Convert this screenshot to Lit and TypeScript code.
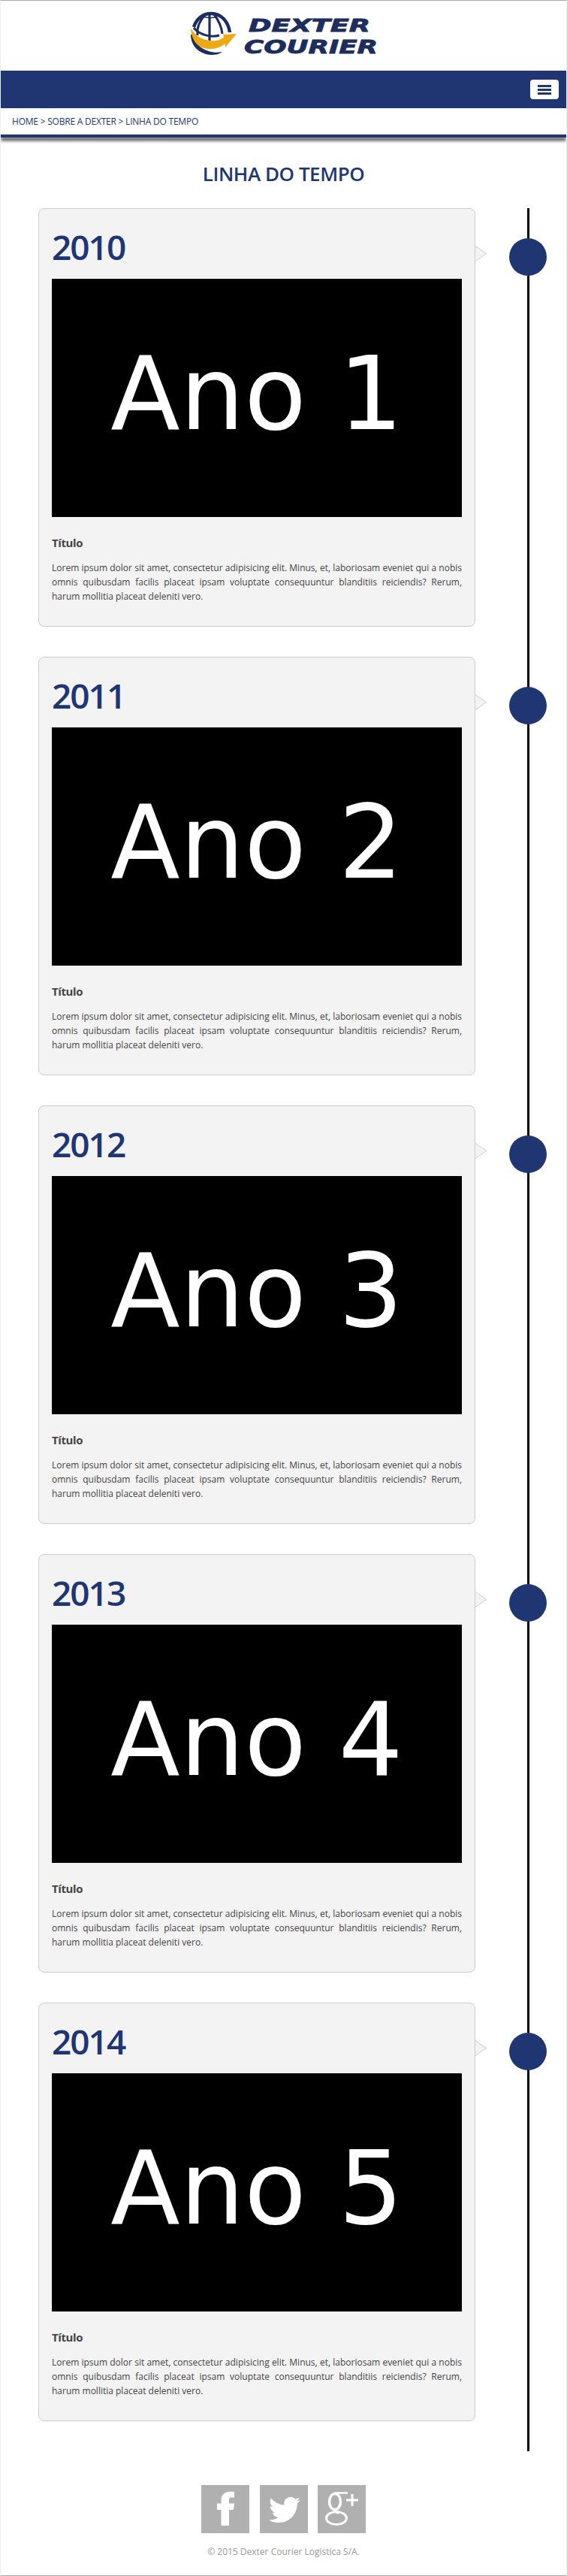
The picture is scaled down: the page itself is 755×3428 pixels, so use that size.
import { LitElement, html, css, svg } from "lit";
import { customElement } from "lit/decorators.js";

const LOREM =
  "Lorem ipsum dolor sit amet, consectetur adipisicing elit. Minus, et, laboriosam eveniet qui a nobis omnis quibusdam facilis placeat ipsam voluptate consequuntur blanditiis reiciendis? Rerum, harum mollitia placeat deleniti vero.";

const YEARS = [2010, 2011, 2012, 2013, 2014];

const logo = svg`
  <g fill="none" stroke="#1c2d5e">
    <path d="M258 36 C262 24 271 18 281 18 C295 18 304 29 306 43" stroke-width="4.500"/>
    <path d="M274 19 C266 27 262 37 263 47" stroke-width="3"/>
    <path d="M285 19 C291 27 295 35 296 45" stroke-width="3"/>
    <path d="M279 18 V60" stroke-width="3.200"/>
    <path d="M258 37 C266 47 282 50 292 47" stroke-width="3"/>
    <path d="M270 22 C276 24 284 24 289 22" stroke-width="1.600"/>
    <path d="M254 46 C254 60 264 72 281 73 C288 73 292 72 296 69 C282 72 262 66 256 46 Z" fill="#1c2d5e" stroke="none"/>
  </g>
  <path d="M254 37 C258 46 268 53 280 54 C288 55 294 53 298 50 L297 46 L315 45 L300 63 L300 58 C294 63 285 66 277 65 C264 64 255 55 254 37 Z" fill="#eeaa14"/>
  <g font-family="'DejaVu Sans', sans-serif" font-weight="700" font-style="italic" fill="#1c2d5e" stroke="#1c2d5e" stroke-width="0.800">
    <text x="331" y="42" font-size="23" textLength="162" lengthAdjust="spacingAndGlyphs">DEXTER</text>
    <text x="325" y="71" font-size="24" textLength="178" lengthAdjust="spacingAndGlyphs">COURIER</text>
  </g>
`;

const facebook = svg`<path fill="#fff" d="M37 54V33h6l1-8.500h-7v-5c0-2 1-3 3-3h4V9c-1.500-.3-3-.3-5-.3-8 0-12.500 4.300-12.500 11.300v4.500H21V33h5.500v21z"/>`;

const twitter = svg`<path fill="#fff" transform="translate(12 12) scale(1.75)" d="M23.953 4.57a10 10 0 01-2.825.775 4.958 4.958 0 002.163-2.723c-.951.555-2.005.959-3.127 1.184a4.92 4.92 0 00-8.384 4.482C7.69 8.095 4.067 6.13 1.64 3.162a4.822 4.822 0 00-.666 2.475c0 1.71.87 3.213 2.188 4.096a4.904 4.904 0 01-2.228-.616v.06a4.923 4.923 0 003.946 4.827 4.996 4.996 0 01-2.212.085 4.936 4.936 0 004.604 3.417 9.867 9.867 0 01-6.102 2.105c-.39 0-.779-.023-1.17-.067a13.995 13.995 0 007.557 2.209c9.053 0 13.998-7.496 13.998-13.985 0-.21 0-.42-.015-.63A9.935 9.935 0 0024 4.59z"/>`;

const gplus = svg`
  <g fill="none" stroke="#fff">
    <ellipse cx="23" cy="22" rx="7.500" ry="10.500" stroke-width="3.500"/>
    <ellipse cx="25" cy="44" rx="13.500" ry="8.500" stroke-width="3"/>
    <path d="M22 10.500 H40" stroke-width="2.500"/>
    <path d="M23 32 C20 35 24 36 28 38" stroke-width="2.500"/>
    <path d="M46 12 V28 M38 20 H54" stroke-width="3"/>
  </g>`;

@customElement("app-root")
export class AppRoot extends LitElement {
  static styles = css`
    :host {
      display: block;
      box-sizing: border-box;
      height: 3428px;
      border: 1px solid #eee;
      border-top-color: #aaa;
      border-bottom-color: #aaa;
      background: #fff;
      font-family: "Open Sans", sans-serif;
      color: #444;
      overflow: hidden;
    }
    .logo-bar {
      height: 93px;
      display: flex;
      justify-content: center;
      align-items: flex-start;
    }
    .logo-bar svg {
      display: block;
      margin-top: 9px;
    }
    .nav {
      height: 50px;
      background: #203673;
      display: flex;
      align-items: center;
      justify-content: flex-end;
      padding-right: 10px;
    }
    .burger {
      width: 38px;
      height: 26px;
      background: #fff;
      border-radius: 4px;
      display: flex;
      flex-direction: column;
      align-items: center;
      justify-content: center;
      gap: 2px;
    }
    .burger span {
      display: block;
      width: 18px;
      height: 3px;
      background: #203673;
    }
    .crumbs {
      height: 35px;
      line-height: 35px;
      padding-left: 15px;
      font-size: 12px;
      color: #203673;
      text-transform: uppercase;
      letter-spacing: -0.22px;
    }
    .rule {
      height: 4px;
      background: #203673;
      box-shadow: 0 4px 4px #333;
    }
    h1 {
      margin: 0;
      padding-top: 33px;
      height: 61px;
      line-height: 30px;
      font-size: 26px;
      font-weight: 600;
      text-align: center;
      color: #203673;
      letter-spacing: -0.45px;
      box-sizing: content-box;
    }
    .timeline {
      position: relative;
      margin: 0 0 0 50px;
      width: 582px;
    }
    .line {
      position: absolute;
      left: 651px;
      top: 0;
      bottom: 0;
      width: 3px;
      background: #000;
    }
    .item {
      position: relative;
      padding-bottom: 40px;
    }
    .card {
      box-sizing: border-box;
      height: 557px;
      background: #f3f3f3;
      border: 1px solid #ccc;
      border-radius: 8px;
      padding: 17px 17px 0;
    }
    .arrow {
      position: absolute;
      left: 581px;
      top: 50px;
      display: block;
    }
    .dot {
      position: absolute;
      left: 627px;
      top: 40px;
      width: 50px;
      height: 50px;
      border-radius: 50%;
      background: #203673;
    }
    h2 {
      margin: 3px 0 13px;
      height: 60px;
      line-height: 60px;
      font-size: 46px;
      font-weight: 600;
      color: #203673;
      letter-spacing: -2px;
    }
    .img {
      box-sizing: border-box;
      height: 317px;
      padding-bottom: 11px;
      background: #000;
      color: #fff;
      display: flex;
      align-items: center;
      justify-content: center;
      font-family: "DejaVu Sans", sans-serif;
      font-size: 135px;
    }
    h3 {
      margin: 24px 0 14px;
      height: 20px;
      line-height: 20px;
      font-size: 15px;
      font-weight: 700;
      letter-spacing: -0.4px;
    }
    p {
      margin: 0;
      font-size: 12px;
      line-height: 19px;
      text-align: justify;
    }
    .social {
      display: flex;
      justify-content: center;
      gap: 13.5px;
      margin-top: 45px;
    }
    .social svg {
      display: block;
      background: #b0b0b0;
    }
    .copy {
      margin-top: 15px;
      line-height: 20px;
      font-size: 12px;
      text-align: center;
      color: #999;
    }
  `;

  render() {
    return html`
      <header class="logo-bar">
        <svg width="261" height="68" viewBox="247 10 261 68">${logo}</svg>
      </header>
      <nav class="nav">
        <div class="burger"><span></span><span></span><span></span></div>
      </nav>
      <div class="crumbs">Home &gt; Sobre a Dexter &gt; Linha do Tempo</div>
      <div class="rule"></div>
      <h1>LINHA DO TEMPO</h1>
      <main class="timeline">
        <div class="line"></div>
        ${YEARS.map(
          (year, i) => html`
            <section class="item">
              <article class="card">
                <h2>${year}</h2>
                <div class="img">Ano ${i + 1}</div>
                <h3>Título</h3>
                <p>${LOREM}</p>
              </article>
              <svg class="arrow" width="17" height="21" viewBox="0 0 17 21">
                <path d="M1 0.500 L15.500 10.500 L1 20.500 Z" fill="#f3f3f3" stroke="none" />
                <path d="M1 0.500 L15.500 10.500 L1 20.500" fill="none" stroke="#ccc" />
              </svg>
              <div class="dot"></div>
            </section>
          `
        )}
      </main>
      <footer>
        <div class="social">
          <svg width="64" height="64" viewBox="0 0 64 64">${facebook}</svg>
          <svg width="64" height="64" viewBox="0 0 64 64">${twitter}</svg>
          <svg width="64" height="64" viewBox="0 0 64 64">${gplus}</svg>
        </div>
        <div class="copy">© 2015 Dexter Courier Logistica S/A.</div>
      </footer>
    `;
  }
}
